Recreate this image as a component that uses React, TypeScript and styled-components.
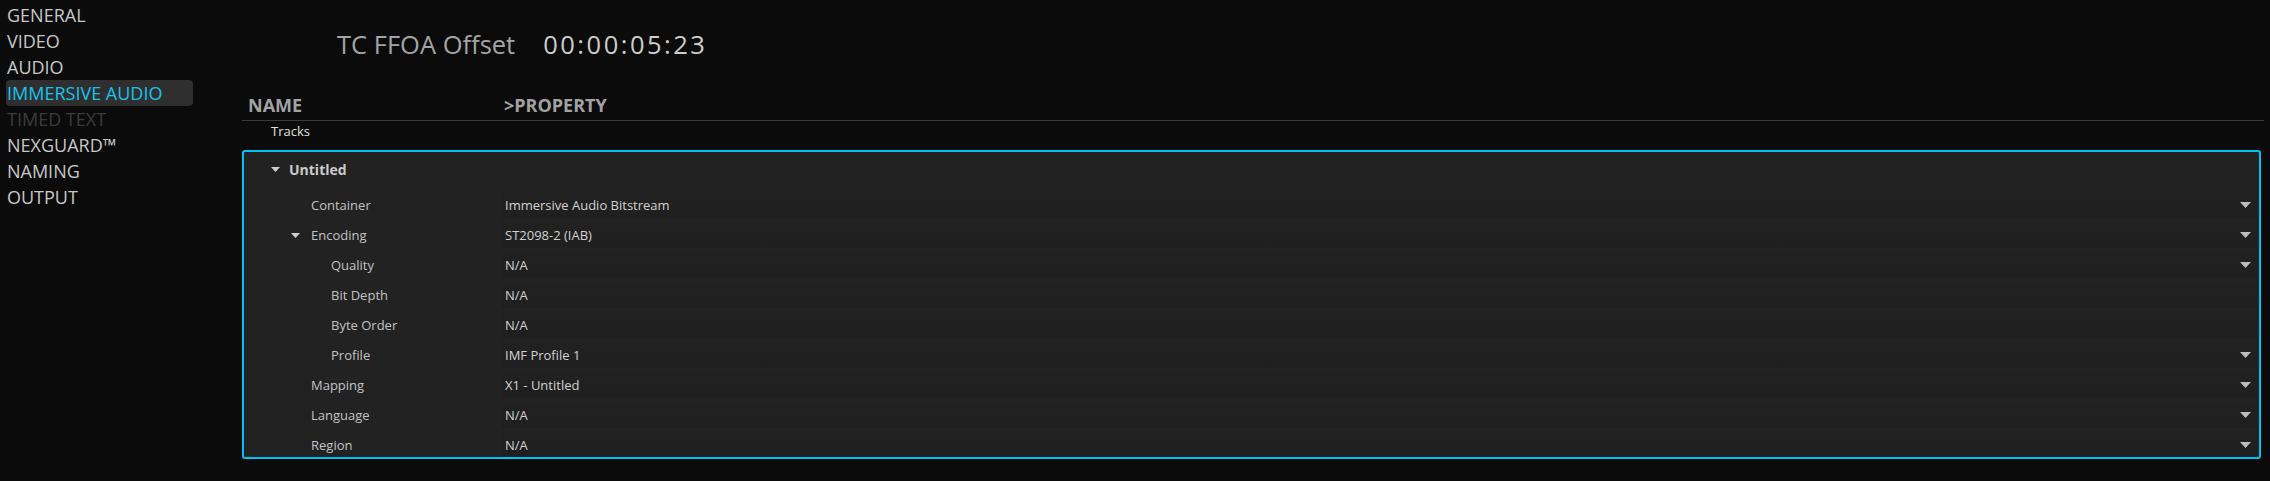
import styled, { createGlobalStyle } from 'styled-components';

type Prop = {
  label: string;
  value: string;
  level: 0 | 1;
  expandable?: boolean;
  dropdown?: boolean;
};

const NAV = [
  { label: 'GENERAL' },
  { label: 'VIDEO' },
  { label: 'AUDIO' },
  { label: 'IMMERSIVE AUDIO', active: true },
  { label: 'TIMED TEXT', disabled: true },
  { label: 'NEXGUARD™' },
  { label: 'NAMING' },
  { label: 'OUTPUT' },
];

const PROPS: Prop[] = [
  { label: 'Container', value: 'Immersive Audio Bitstream', level: 0, dropdown: true },
  { label: 'Encoding', value: 'ST2098-2 (IAB)', level: 0, expandable: true, dropdown: true },
  { label: 'Quality', value: 'N/A', level: 1, dropdown: true },
  { label: 'Bit Depth', value: 'N/A', level: 1 },
  { label: 'Byte Order', value: 'N/A', level: 1 },
  { label: 'Profile', value: 'IMF Profile 1', level: 1, dropdown: true },
  { label: 'Mapping', value: 'X1 - Untitled', level: 0, dropdown: true },
  { label: 'Language', value: 'N/A', level: 0, dropdown: true },
  { label: 'Region', value: 'N/A', level: 0, dropdown: true },
];

const Caret = ({ w, h, color }: { w: number; h: number; color: string }) => (
  <svg width={w} height={h} viewBox={`0 0 ${w} ${h}`}>
    <polygon points={`0,0 ${w},0 ${w / 2},${h}`} fill={color} />
  </svg>
);

export default function App() {
  return (
    <>
      <GlobalStyle />
      <Page>
        <Sidebar>
          {NAV.map(n => (
            <NavItem key={n.label} $active={n.active} $disabled={n.disabled}>
              {n.label}
            </NavItem>
          ))}
        </Sidebar>
        <Main>
          <TitleRow>
            <Title>TC FFOA Offset</Title>
            <Timecode>00:00:05:23</Timecode>
          </TitleRow>
          <ColumnHeader>
            <NameCol>NAME</NameCol>
            <span>&gt;PROPERTY</span>
          </ColumnHeader>
          <TracksRow>Tracks</TracksRow>
          <Panel>
            <GroupHeader>
              <Caret w={9} h={5} color="#cfcfcf" />
              Untitled
            </GroupHeader>
            {PROPS.map(p => (
              <PropRow key={p.label}>
                <Label $level={p.level}>
                  {p.expandable && (
                    <Expander>
                      <Caret w={9} h={5} color="#cfcfcf" />
                    </Expander>
                  )}
                  {p.label}
                </Label>
                <ValueCell>
                  <span>{p.value}</span>
                  {p.dropdown && <Caret w={11} h={6} color="#bdbdbd" />}
                </ValueCell>
              </PropRow>
            ))}
          </Panel>
        </Main>
      </Page>
    </>
  );
}

const GlobalStyle = createGlobalStyle`
  body {
    margin: 0;
    background: #0b0b0b;
    font-family: 'Open Sans', 'Noto Sans', sans-serif;
  }
`;

const Page = styled.div`
  display: flex;
  height: 481px;
  background: #0b0b0b;
  overflow: hidden;
`;

// Sidebar
const Sidebar = styled.nav`
  width: 242px;
  flex-shrink: 0;
  box-sizing: border-box;
  padding: 2px 0 0 6px;
  display: flex;
  flex-direction: column;
`;

const NavItem = styled.div<{ $active?: boolean; $disabled?: boolean }>`
  width: 187px;
  height: 26px;
  box-sizing: border-box;
  padding-left: 1px;
  line-height: 26px;
  font-size: 18px;
  border-radius: 4px;
  white-space: nowrap;
  background: ${({ $active }) => ($active ? '#2f2f2f' : 'transparent')};
  color: ${({ $active, $disabled }) => ($active ? '#17c3f2' : $disabled ? '#3b3b3b' : '#c8c8c8')};
`;

// Main area
const Main = styled.main`
  flex: 1;
  min-width: 0;
  padding-right: 6px;
  display: flex;
  flex-direction: column;
`;

const TitleRow = styled.div`
  display: flex;
  gap: 28px;
  padding: 27px 0 0 95px;
  font-size: 25.5px;
  line-height: 35px;
`;

const Title = styled.span`
  color: #a4a4a4;
`;

const Timecode = styled.span`
  color: #cdcdcd;
  letter-spacing: 2.5px;
`;

const ColumnHeader = styled.div`
  display: flex;
  margin-top: 30px;
  padding: 0 0 2px 6px;
  border-bottom: 1px solid #3a3a3a;
  font-size: 18px;
  font-weight: 700;
  line-height: 26px;
  color: #a2a2a2;
`;

const NameCol = styled.span`
  width: 256px;
`;

const TracksRow = styled.div`
  padding: 1px 0 0 29px;
  font-size: 13px;
  line-height: 18px;
  color: #e0e0e0;
`;

const Panel = styled.section`
  margin: 10px 3px 0 0;
  height: 309px;
  box-sizing: border-box;
  border: 2px solid #00c3f3;
  border-radius: 3px;
  background: #222222;
  overflow: hidden;
`;

const GroupHeader = styled.div`
  height: 38px;
  box-sizing: border-box;
  padding: 0 0 3px 27px;
  display: flex;
  align-items: center;
  gap: 9px;
  font-size: 14px;
  font-weight: 700;
  color: #cbcbcb;
`;

const PropRow = styled.div`
  display: flex;
  align-items: center;
  height: 30px;
`;

const Label = styled.div<{ $level: number }>`
  width: 258px;
  flex-shrink: 0;
  box-sizing: border-box;
  padding-left: ${({ $level }) => ($level ? 87 : 67)}px;
  position: relative;
  font-size: 13px;
  line-height: 30px;
  color: #c2c2c2;
`;

const Expander = styled.span`
  position: absolute;
  left: 47px;
  top: 13px;
  display: flex;
`;

const ValueCell = styled.div`
  flex: 1;
  height: 26px;
  margin-right: 2px;
  padding: 0 6px 0 3px;
  display: flex;
  align-items: center;
  justify-content: space-between;
  background: linear-gradient(#212121, #1f1f1f);
  font-size: 13px;
  color: #d2d2d2;
`;
